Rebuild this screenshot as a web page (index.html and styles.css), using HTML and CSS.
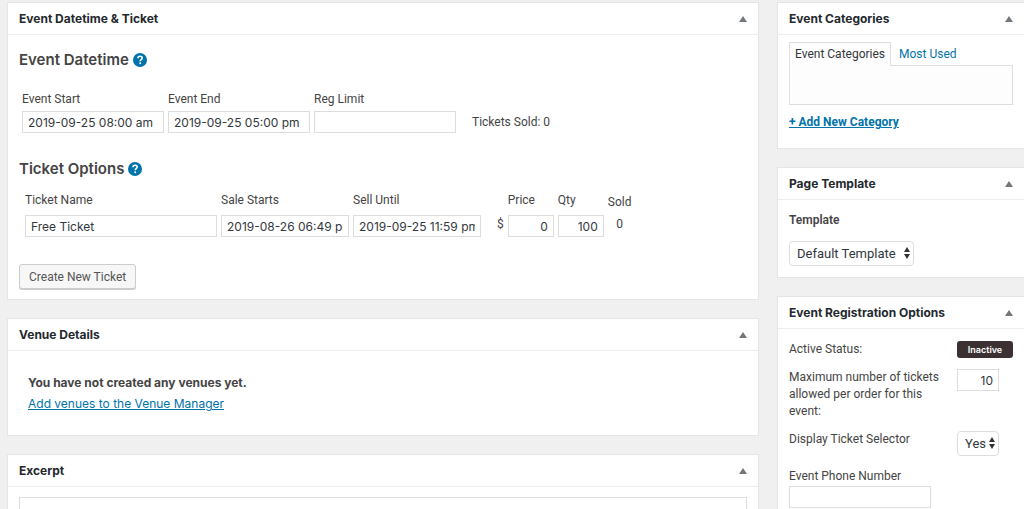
FILE: index.html
```html
<!DOCTYPE html>
<html lang="en">
<head>
	<meta charset="utf-8">
	<title>Edit Event</title>
	<link rel="stylesheet" href="styles.css">
</head>
<body>
	<div class="wrap">
		<main class="main">
			<section class="postbox">
				<div class="postbox-header">
					<h2>Event Datetime &amp; Ticket</h2>
					<button class="toggle" type="button" aria-label="Toggle panel"></button>
				</div>
				<div class="inside">
					<h3>Event Datetime
						<svg class="help" viewBox="0 0 14 14"><circle cx="7" cy="7" r="7" fill="#0073aa"/><path d="M4.9 5.3C5 3.9 5.9 3.3 7.1 3.3c1.2 0 2.1.7 2.1 1.8 0 1.5-2 1.5-2 3.1" fill="none" stroke="#fff" stroke-width="1.6"/><circle cx="7.2" cy="10.3" r="1" fill="#fff"/></svg>
					</h3>
					<div class="fields datetime">
						<div class="field date">
							<label for="start">Event Start</label>
							<input type="text" id="start" value="2019-09-25 08:00 am">
						</div>
						<div class="field date">
							<label for="end">Event End</label>
							<input type="text" id="end" value="2019-09-25 05:00 pm">
						</div>
						<div class="field date">
							<label for="limit">Reg Limit</label>
							<input type="text" id="limit">
						</div>
						<span class="tickets-sold">Tickets Sold: 0</span>
					</div>
					<h3>Ticket Options
						<svg class="help" viewBox="0 0 14 14"><circle cx="7" cy="7" r="7" fill="#0073aa"/><path d="M4.9 5.3C5 3.9 5.9 3.3 7.1 3.3c1.2 0 2.1.7 2.1 1.8 0 1.5-2 1.5-2 3.1" fill="none" stroke="#fff" stroke-width="1.6"/><circle cx="7.2" cy="10.3" r="1" fill="#fff"/></svg>
					</h3>
					<div class="fields ticket">
						<div class="field name">
							<label for="name">Ticket Name</label>
							<input type="text" id="name" value="Free Ticket">
						</div>
						<div class="field sale">
							<label for="sale">Sale Starts</label>
							<input type="text" id="sale" value="2019-08-26 06:49 pm">
						</div>
						<div class="field sale">
							<label for="until">Sell Until</label>
							<input type="text" id="until" value="2019-09-25 11:59 pm">
						</div>
						<span class="currency">$</span>
						<div class="field num">
							<label for="price">Price</label>
							<input type="text" id="price" value="0">
						</div>
						<div class="field num">
							<label for="qty">Qty</label>
							<input type="text" id="qty" value="100">
						</div>
						<div class="sold">
							<span>Sold</span>
							<span>0</span>
						</div>
					</div>
					<button class="button" type="button">Create New Ticket</button>
				</div>
			</section>

			<section class="postbox">
				<div class="postbox-header">
					<h2>Venue Details</h2>
					<button class="toggle" type="button" aria-label="Toggle panel"></button>
				</div>
				<div class="inside venues">
					<strong>You have not created any venues yet.</strong>
					<a href="#">Add venues to the Venue Manager</a>
				</div>
			</section>

			<section class="postbox">
				<div class="postbox-header">
					<h2>Excerpt</h2>
					<button class="toggle" type="button" aria-label="Toggle panel"></button>
				</div>
				<div class="inside">
					<textarea class="excerpt" aria-label="Excerpt"></textarea>
				</div>
			</section>
		</main>

		<aside class="side">
			<section class="postbox">
				<div class="postbox-header">
					<h2>Event Categories</h2>
					<button class="toggle" type="button" aria-label="Toggle panel"></button>
				</div>
				<div class="inside categories">
					<div class="tabs">
						<a class="tab active" href="#">Event Categories</a>
						<a class="tab" href="#">Most Used</a>
					</div>
					<div class="tabs-panel"></div>
					<a class="add-new" href="#">+ Add New Category</a>
				</div>
			</section>

			<section class="postbox">
				<div class="postbox-header">
					<h2>Page Template</h2>
					<button class="toggle" type="button" aria-label="Toggle panel"></button>
				</div>
				<div class="inside template">
					<label for="template">Template</label>
					<div class="select">
						<select id="template"><option>Default Template</option></select>
						<svg class="arrows" viewBox="0 0 6 12"><path d="M0 5L3 0l3 5zM0 7l3 5 3-5z" fill="#333"/></svg>
					</div>
				</div>
			</section>

			<section class="postbox">
				<div class="postbox-header">
					<h2>Event Registration Options</h2>
					<button class="toggle" type="button" aria-label="Toggle panel"></button>
				</div>
				<div class="inside options">
					<div class="option">
						<span>Active Status:</span>
						<div class="control"><span class="status">Inactive</span></div>
					</div>
					<div class="option">
						<label for="max">Maximum number of tickets allowed per order for this event:</label>
						<div class="control"><input type="text" id="max" value="10"></div>
					</div>
					<div class="option">
						<label for="selector">Display Ticket Selector</label>
						<div class="control">
							<div class="select">
								<select id="selector"><option>Yes</option></select>
								<svg class="arrows" viewBox="0 0 6 12"><path d="M0 5L3 0l3 5zM0 7l3 5 3-5z" fill="#333"/></svg>
							</div>
						</div>
					</div>
					<div class="phone">
						<label for="phone">Event Phone Number</label>
						<input type="text" id="phone">
					</div>
				</div>
			</section>
		</aside>
	</div>
</body>
</html>
```

FILE: styles.css
```css
* {
	box-sizing: border-box;
}
html {
	scrollbar-width: none;
}
body {
	margin: 0;
	background: #f0f0f0;
	color: #444;
	font: 12px/17px Roboto, "Liberation Sans", sans-serif;
}
a {
	color: #0073aa;
}
input,
select,
textarea,
button {
	margin: 0;
	font-family: inherit;
	color: #32373c;
}
input {
	width: 100%;
	height: 22px;
	padding: 0 5px;
	border: 1px solid #ddd;
	background: #fff;
	font-family: Inter, sans-serif;
	font-size: 12px;
}
.wrap {
	display: flex;
	gap: 18px;
	padding: 2px 0 0 7px;
}
.main {
	flex: 1;
	min-width: 0;
}
.side {
	width: 247px;
}

/* panels */
.postbox {
	margin-bottom: 18px;
	border: 1px solid #e5e5e5;
	background: #fff;
}
.side .postbox {
	border-right: none;
}
.postbox-header {
	display: flex;
	align-items: center;
	justify-content: space-between;
	height: 32px;
	padding: 0 11px;
	border-bottom: 1px solid #eee;
}
h2 {
	margin: 0;
	font-family: Inter, sans-serif;
	font-size: 12px;
	font-weight: 700;
	color: #23282d;
}
.toggle {
	padding: 0;
	border: 4px solid transparent;
	border-top: none;
	border-bottom: 6px solid #72777c;
	background: none;
}
.inside {
	padding: 10px 11px;
}
h3 {
	display: flex;
	align-items: center;
	gap: 4px;
	margin: 0;
	padding: 4px 0;
	font-family: Inter, sans-serif;
	font-size: 15px;
	line-height: 22px;
	font-weight: 600;
}
.help {
	width: 14px;
	height: 14px;
}

/* datetime and ticket rows */
.fields {
	display: flex;
	align-items: flex-end;
	gap: 4px;
}
.field label {
	display: block;
}
.datetime {
	padding: 16px 3px 21px;
}
.datetime label {
	margin-bottom: 3px;
}
.date {
	width: 142px;
}
.tickets-sold {
	margin-left: 12px;
	line-height: 22px;
}
.ticket {
	padding: 8px 6px 27px;
}
.ticket label {
	margin-bottom: 6px;
}
.name {
	width: 192px;
}
.sale {
	width: 128px;
}
.num {
	width: 46px;
}
.num input {
	text-align: right;
}
.currency {
	margin-left: 12px;
	line-height: 26px;
}
.sold {
	display: flex;
	flex-direction: column;
	align-items: center;
	gap: 5px;
	padding-bottom: 4px;
}
.button {
	height: 25px;
	padding: 0 9px;
	border: 1px solid #ccc;
	border-radius: 3px;
	background: #f7f7f7;
	box-shadow: 0 1px 0 #ccc;
	font-size: 12px;
	color: #555;
}

.venues {
	display: flex;
	flex-direction: column;
	align-items: flex-start;
	gap: 4px;
	padding: 23px 20px;
	font-family: Inter, sans-serif;
}
.venues strong {
	font-weight: 700;
}
.excerpt {
	display: block;
	width: 100%;
	height: 60px;
	border: 1px solid #ddd;
	resize: none;
}

/* categories */
.categories {
	padding: 7px 11px 17px;
}
.tabs {
	display: flex;
}
.tab {
	padding: 3px 5px;
	border: 1px solid transparent;
	border-bottom: none;
	text-decoration: none;
}
.tab.active {
	position: relative;
	margin-right: 2px;
	border-color: #ddd;
	background: #fdfdfd;
	color: #32373c;
}
.tabs-panel {
	height: 40px;
	margin-top: -1px;
	margin-bottom: 9px;
	border: 1px solid #ddd;
	background: #fdfdfd;
}
.add-new {
	font-weight: 700;
}

/* selects */
.select {
	display: inline-block;
	position: relative;
}
select {
	display: block;
	height: 25px;
	padding: 0 17px 0 7px;
	border: 1px solid #ddd;
	border-radius: 4px;
	background: #fff;
	font-size: 13px;
	appearance: none;
}
.arrows {
	position: absolute;
	top: 6px;
	right: 4px;
	width: 6px;
	height: 12px;
	pointer-events: none;
}
.template {
	padding: 12px 11px 11px;
}
.template label {
	display: block;
	margin-bottom: 12px;
	font-weight: 600;
}

/* registration options */
.options {
	display: flex;
	flex-direction: column;
	gap: 11px;
	padding: 12px 11px;
}
.option {
	display: flex;
	justify-content: space-between;
}
.option label {
	width: 154px;
}
.control {
	width: 56px;
}
.control input {
	width: 42px;
	text-align: right;
}
.control select {
	padding-right: 12px;
}
.status {
	display: block;
	border-radius: 3px;
	background: #3b3132;
	color: #fff;
	font-family: Inter, sans-serif;
	font-size: 9px;
	font-weight: 600;
	text-align: center;
}
.phone {
	padding-top: 1px;
}
.phone label {
	display: block;
	margin-bottom: 1px;
}
.phone input {
	width: 142px;
}
```
